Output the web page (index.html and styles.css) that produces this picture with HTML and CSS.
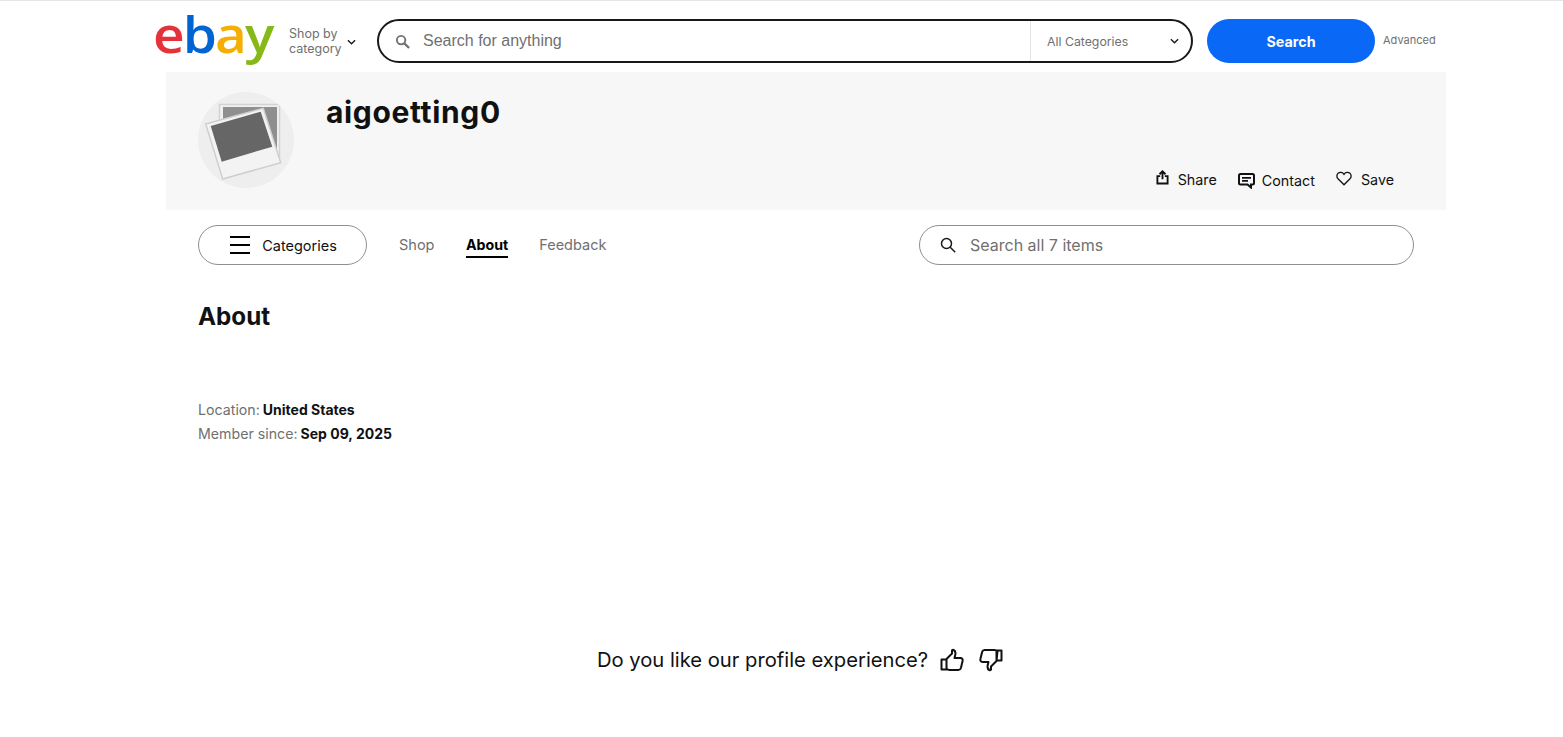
FILE: index.html
```html
<!DOCTYPE html>
<html lang="en">
<head>
<meta charset="utf-8">
<title>aigoetting0 | eBay</title>
<link rel="stylesheet" href="styles.css">
</head>
<body>
<header class="gh">
  <a class="logo" href="#"><span class="l-e">e</span><span class="l-b">b</span><span class="l-a">a</span><span class="l-y">y</span></a>
  <button class="shopby"><span>Shop by<br>category</span>
    <svg class="chev" viewBox="0 0 10 6" width="9" height="6"><path d="M1 1l4 4 4-4" fill="none" stroke="#191919" stroke-width="1.5"/></svg>
  </button>
  <form class="gh-search">
    <svg class="gh-mag" viewBox="0 0 16 16" width="15" height="15"><circle cx="6.5" cy="6.5" r="4.5" fill="none" stroke="#707070" stroke-width="2"/><path d="M10 10l5 5" stroke="#707070" stroke-width="2.4"/></svg>
    <span class="gh-ph">Search for anything</span>
    <span class="gh-cat">All Categories
      <svg viewBox="0 0 10 6" width="9" height="6"><path d="M1 1l4 4 4-4" fill="none" stroke="#191919" stroke-width="1.5"/></svg>
    </span>
  </form>
  <button class="gh-btn">Search</button>
  <a class="gh-adv" href="#">Advanced</a>
</header>

<main class="page">
  <section class="banner">
    <div class="avatar">
      <svg viewBox="0 0 96 96" width="96" height="96">
        <rect x="21.500" y="12.500" width="60" height="56" fill="#f1f1f1" stroke="#d4d4d4" stroke-width="1.500"/>
        <rect x="25" y="15" width="54" height="44" fill="#8f8f8f"/>
        <polygon points="7.700,32 65.300,16.300 82.700,70.700 24.700,87" fill="#f3f3f3" stroke="#cfcfcf" stroke-width="1.500"/>
        <polygon points="12.700,34 62.700,19.700 74.300,54.700 23.700,69.700" fill="#666"/>
      </svg>
    </div>
    <h1 class="name">aigoetting0</h1>
    <div class="actions">
      <a class="act" href="#"><svg class="ic-share" viewBox="0 0 14 16" width="13" height="15"><path d="M4.500 6.500H1.500v8h11v-8h-3" fill="none" stroke="#111" stroke-width="2"/><path d="M7 10V1.500M3.800 4.500L7 1.300l3.200 3.200" fill="none" stroke="#111" stroke-width="2"/></svg>Share</a>
      <a class="act act-contact" href="#"><svg viewBox="0 0 17 16" width="17" height="16"><path d="M2.500 1h12A1.500 1.500 0 0 1 16 2.500v7.500a1.500 1.500 0 0 1-1.500 1.500H13v3l-3.500-3h-7A1.500 1.500 0 0 1 1 10V2.500A1.500 1.500 0 0 1 2.500 1z" fill="none" stroke="#111" stroke-width="2"/><path d="M4 4.800h9M4 7.800h6" stroke="#111" stroke-width="1.700"/></svg>Contact</a>
      <a class="act" href="#"><svg class="ic-heart" viewBox="0 0 16 15" width="16" height="15"><path d="M8 13.800L2 7.800C.3 6 .6 3.300 2.300 2c1.800-1.300 4.300-.8 5.700 1.300C9.400 1.200 11.900.7 13.700 2c1.700 1.300 2 4 .3 5.800z" fill="none" stroke="#111" stroke-width="1.300"/></svg>Save</a>
    </div>
  </section>

  <nav class="subnav">
    <button class="cats"><span class="burger"><i></i><i></i><i></i></span>Categories</button>
    <a class="tab" href="#">Shop</a>
    <a class="tab tab-on" href="#">About</a>
    <a class="tab" href="#">Feedback</a>
    <div class="store-search">
      <svg viewBox="0 0 16 16" width="16" height="16"><circle cx="6.500" cy="6.500" r="5" fill="none" stroke="#191919" stroke-width="1.500"/><path d="M10.200 10.200l5 5" stroke="#191919" stroke-width="1.500"/></svg>
      <span>Search all 7 items</span>
    </div>
  </nav>

  <section class="about">
    <h2>About</h2>
    <p class="meta">Location: <b>United States</b></p>
    <p class="meta">Member since: <b>Sep 09, 2025</b></p>
  </section>

  <section class="feedback">
    <span>Do you like our profile experience?</span>
    <svg viewBox="0 0 24 24" width="24" height="24"><path d="M6.500 11L12 5.500V2.500c0-1 3.500-1.200 3.500 2.500 0 1.800-.6 3.400-1 5h6c1.800 0 2.500 1.500 2.100 3l-1.700 7c-.4 1.300-1.200 2-2.500 2H9.500c-1.300 0-2.200-.5-3-1.500zM1.500 11.500h5v10h-5z" fill="none" stroke="#111" stroke-width="2" stroke-linejoin="round"/></svg>
    <svg viewBox="0 0 24 24" width="24" height="24"><path d="M17.500 13L12 18.500v3c0 1-3.500 1.200-3.500-2.500 0-1.800.6-3.400 1-5h-6c-1.800 0-2.500-1.500-2.100-3l1.700-7c.4-1.300 1.200-2 2.500-2h9.900c1.300 0 2.200.5 3 1.500zM22.500 12.500h-5v-10h5z" fill="none" stroke="#111" stroke-width="2" stroke-linejoin="round"/></svg>
  </section>
</main>
</body>
</html>
```
FILE: styles.css
```css
* { box-sizing: border-box; }
html, body { margin: 0; padding: 0; background: #fff; }
body { font-family: Inter, "Liberation Sans", sans-serif; color: #111; border-top: 1px solid #e5e5e5; height: 737px; overflow: hidden; }
a { color: inherit; text-decoration: none; }
button { font-family: inherit; cursor: pointer; background: none; border: 0; padding: 0; }

.gh { display: flex; align-items: center; height: 71px; padding: 9px 0 0 153px; }
.logo { width: 120px; flex: none; display: flex; padding-bottom: 14px; font-family: "Open Sans", sans-serif; font-size: 50px; line-height: 62px; letter-spacing: -1.800px; font-weight: 600; transform: scaleX(1.1); transform-origin: left center; }
.l-e { color: #e53238; }
.l-b { color: #0064d2; }
.l-a { color: #f5af02; }
.l-y { color: #86b817; }
.shopby { margin-left: 16px; width: 72px; display: flex; align-items: center; justify-content: space-between; text-align: left; font-size: 12.500px; line-height: 15px; color: #707070; }
.shopby .chev { margin-top: 1px; margin-right: 5px; }
.gh-search { margin-left: 16px; width: 816px; height: 44px; border: 2px solid #191919; border-radius: 22px; display: flex; align-items: center; padding-left: 16px; }
.gh-ph { margin-left: 13px; flex: 1; font-family: "Liberation Sans", sans-serif; font-size: 16px; color: #707070; }
.gh-cat { width: 161px; height: 40px; border-left: 1px solid #e5e5e5; display: flex; align-items: center; justify-content: space-between; padding: 0 12px 0 16px; font-size: 12.300px; color: #707070; }
.gh-btn { margin-left: 14px; width: 168px; height: 44px; border-radius: 22px; background: #0968f6; color: #fff; font-weight: 700; font-size: 14.300px; }
.gh-adv { margin-left: 8px; font-size: 11px; color: #707070; margin-top: -2px; }

.page { margin-left: 166px; width: 1280px; }
.banner { height: 138px; background: #f7f7f7; display: flex; padding: 20px 52px 0 32px; }
.avatar { width: 96px; height: 96px; border-radius: 50%; background: #eeeeee; overflow: hidden; flex: none; }
.avatar svg { display: block; }
.name { margin: 0 0 0 32px; font-size: 30px; font-weight: 700; line-height: 40px; letter-spacing: .65px; color: #111; }
.actions { margin-left: auto; display: flex; gap: 21px; align-self: flex-start; margin-top: 78px; font-size: 14.300px; }
.act { display: flex; align-items: center; gap: 9px; }
.act-contact { gap: 7px; margin-top: 2px; }
.ic-share { margin-top: -4px; }
.ic-heart { margin-top: -2px; }

.subnav { display: flex; align-items: center; margin-top: 15px; padding: 0 32px; height: 40px; font-size: 14.500px; }
.cats { width: 169px; height: 40px; border: 1px solid #8f8f8f; border-radius: 20px; display: flex; align-items: center; justify-content: center; gap: 12px; padding-left: 2px; font-size: 14.500px; color: #111; }
.burger { display: flex; flex-direction: column; justify-content: space-between; width: 20px; height: 18px; }
.burger i { display: block; height: 2px; background: #000; }
.tab { margin-left: 32px; color: #707070; line-height: 26px; height: 26px; }
.tab-on { color: #000; font-weight: 700; font-size: 14.200px; margin-left: 31.500px; margin-right: -1px; border-bottom: 2.500px solid #000; }
.store-search { margin-left: auto; width: 495px; height: 40px; border: 1px solid #8f8f8f; border-radius: 20px; display: flex; align-items: center; gap: 14px; padding-left: 20px; font-size: 16px; color: #707070; }

.about { padding: 0 32px; }
.about h2 { margin: 37px 0 0; font-size: 24.200px; line-height: 30px; font-weight: 700; color: #111; }
.meta { margin: 0; font-size: 14.200px; line-height: 24px; color: #707070; }
.about h2 + .meta { margin-top: 66px; }
.meta b { color: #111; font-weight: 700; font-size: 14px; margin-left: -1px; }

.feedback { display: flex; align-items: center; justify-content: center; gap: 11.500px; margin-top: 200px; margin-left: -12px; font-size: 20.200px; line-height: 28px; color: #111; }
.feedback svg + svg { margin-left: 4px; }
```
